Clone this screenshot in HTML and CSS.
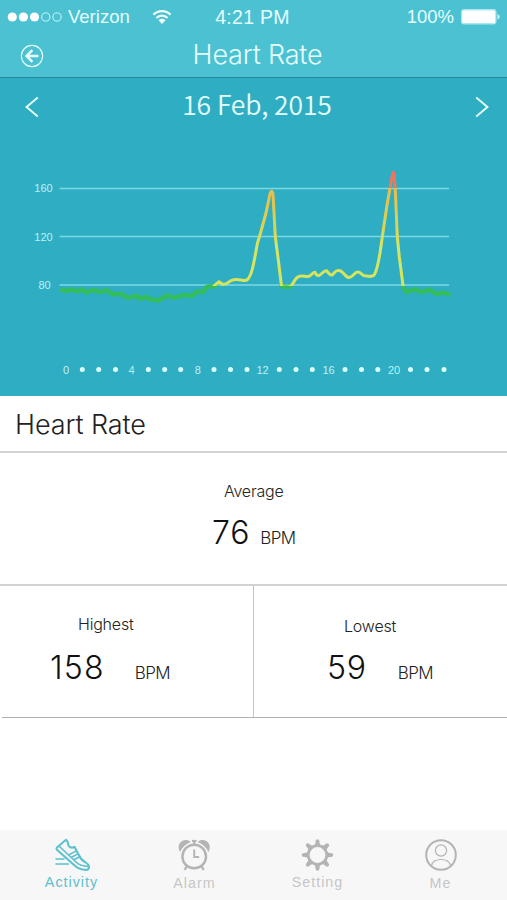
FILE: index.html
```html
<!DOCTYPE html>
<html lang="en">
<head>
  <meta charset="UTF-8">
  <meta name="viewport" content="width=device-width, initial-scale=1.0">
  <title>Heart Rate</title>
  <link rel="stylesheet" href="styles.css">
</head>
<body>
  <div class="app">
    <header class="header">
      <div class="status-bar">
        <div class="carrier">
          <svg class="signal" width="56" height="12" viewBox="0 0 56 12">
            <circle cx="5.3" cy="6" r="4.6" fill="#fff"/>
            <circle cx="16.4" cy="6" r="4.6" fill="#fff"/>
            <circle cx="27.5" cy="6" r="4.6" fill="#fff"/>
            <circle cx="38.8" cy="6" r="4.1" fill="none" stroke="#c5fafd"/>
            <circle cx="50" cy="6" r="4.1" fill="none" stroke="#c5fafd"/>
          </svg>
          <span class="carrier-name">Verizon</span>
          <svg class="wifi" width="20" height="16" viewBox="0 0 20 16">
            <path d="M1.4 5.6a12.4 12.4 0 0 1 17.2 0M4.4 9a8 8 0 0 1 11.2 0" fill="none" stroke="#f2ffff" stroke-width="2.3"/>
            <path d="M6.5 11.3a5 5 0 0 1 7 0L10 15z" fill="#f2ffff"/>
          </svg>
        </div>
        <div class="time">4:21 PM</div>
        <div class="power">
          <span class="percent">100%</span>
          <svg width="40" height="18" viewBox="0 0 40 18">
            <rect x="1" y="1" width="35.5" height="15.5" rx="3" fill="#a9e8ef"/>
            <rect x="2.2" y="2.5" width="33" height="12.5" rx="1.5" fill="#fff"/>
            <path d="M37.5 6v5.5q2.3-.8 2.3-2.7T37.5 6z" fill="#c5f3f6"/>
          </svg>
        </div>
      </div>
      <div class="nav-bar">
        <svg class="back" width="24" height="24" viewBox="0 0 24 24" fill="none" stroke="#e9ffff">
          <circle cx="12" cy="12" r="10.6" stroke-width="1.1"/>
          <path d="M18.4 12H6.8M12.4 6.2L6.5 12l5.9 5.8" stroke-width="2.4"/>
        </svg>
        <h1 class="title">Heart Rate</h1>
      </div>
    </header>

    <section class="chart-panel">
      <div class="date-bar">
        <svg width="14" height="22" viewBox="0 0 14 22" fill="none" stroke="#e4feff" stroke-width="1.9">
          <path d="M12.8 1.5L1.5 11l11.3 9.5"/>
        </svg>
        <div class="date">16 Feb, 2015</div>
        <svg width="14" height="22" viewBox="0 0 14 22" fill="none" stroke="#e4feff" stroke-width="1.9">
          <path d="M1.2 1.5L12.5 11 1.2 20.5"/>
        </svg>
      </div>
      <svg class="chart" width="507" height="260" viewBox="0 136 507 260">
        <defs>
          <linearGradient id="zones" gradientUnits="userSpaceOnUse" x1="0" y1="170" x2="0" y2="310">
            <stop offset="0" stop-color="#f1705c"/>
            <stop offset=".128" stop-color="#e6805e"/>
            <stop offset=".13" stop-color="#e6bd4e"/>
            <stop offset=".4" stop-color="#dcd353"/>
            <stop offset=".55" stop-color="#d8e564"/>
            <stop offset=".825" stop-color="#d6e45b"/>
            <stop offset=".826" stop-color="#33bd5d"/>
            <stop offset="1" stop-color="#33bd5d"/>
          </linearGradient>
        </defs>
        <g class="grid-lines">
          <path d="M59.5 188.5H449"/>
          <path d="M59.5 236.5H449"/>
          <path d="M59.5 285H449"/>
        </g>
        <g class="y-labels">
          <text x="43.5" y="192.3">160</text>
          <text x="43.5" y="240.5">120</text>
          <text x="44.5" y="289">80</text>
        </g>
        <!-- resting zone -->
        <g class="line resting">
          <path d="M62 290L66.5 291l5-1.5 5 2 5-2 5 3 6-2.5 8 2 6-2 6 4.3 8-.3 8 4 8-2.5 4 3.5 5-2.5 5 3 8 1 8.5-5 6.5 2.3 10-2.8 8.5 1 5.5-4.5 5.5.5 4-5.3 9-.7"/>
          <path d="M281.5 286q4 2 9 .2"/>
          <path d="M403.5 288l3.2 4.3 8.3-3 6.7 3 7.3-2.6 7.7 4.300 7.300-1.3 4.500 1.5"/>
        </g>
        <path class="line" stroke="url(#zones)" d="M214 286L219 281.7 222.5 284.3C227 285 229 281 231 280.7C236 278 240 280 243 280.5C248 281 249 278 251 273.5C254 265 256 250 257.5 243L260.5 233 266 213 270 194Q271.7 188.5 273 194L275.3 237 278.3 260 281.5 286Q286 288.5 291 286C294 283 295 278 298 277C302 274.5 305 277 308 276.5C311 276 313 272 315 272.3Q316.5 276 319 275.5C322 274 324 270 326.5 270.7C328 272 329.5 275.5 332 275C335 273 335 270.5 338 270.5C343 269.5 345 277.5 349 277.5C353 277.5 354 272 358 272C361 272 362 276 366 276C370 276.5 373 277 374.5 274.5C377 270 378.5 262 380 253L383.3 230 386.7 207 390 188 392.7 173.5Q393.5 171 394 174L395.2 188 397.3 237 399.3 257 403.2 287"/>
        <g class="x-labels">
          <text x="66" y="373.5">0</text>
          <text x="131.5" y="373.5">4</text>
          <text x="197.7" y="373.5">8</text>
          <text x="262.5" y="373.5">12</text>
          <text x="328.5" y="373.5">16</text>
          <text x="394" y="373.5">20</text>
        </g>
        <g fill="#d9ffff">
          <circle cx="82.3" cy="369.5" r="2.5"/>
          <circle cx="98.7" cy="369.5" r="2.5"/>
          <circle cx="115.5" cy="369.5" r="2.5"/>
          <circle cx="148.3" cy="369.5" r="2.5"/>
          <circle cx="164.7" cy="369.5" r="2.5"/>
          <circle cx="180.7" cy="369.5" r="2.5"/>
          <circle cx="214" cy="369.5" r="2.5"/>
          <circle cx="230.5" cy="369.5" r="2.5"/>
          <circle cx="247" cy="369.5" r="2.5"/>
          <circle cx="279.3" cy="369.5" r="2.5"/>
          <circle cx="296" cy="369.5" r="2.5"/>
          <circle cx="312.3" cy="369.5" r="2.5"/>
          <circle cx="345" cy="369.5" r="2.5"/>
          <circle cx="361.5" cy="369.5" r="2.5"/>
          <circle cx="377.8" cy="369.5" r="2.5"/>
          <circle cx="410.5" cy="369.5" r="2.5"/>
          <circle cx="427" cy="369.5" r="2.5"/>
          <circle cx="444" cy="369.5" r="2.5"/>
        </g>
      </svg>
    </section>

    <main class="summary">
      <h2 class="summary-title">Heart Rate</h2>
      <div class="stat average">
        <div class="label">Average</div>
        <div class="reading"><span class="value">76</span><span class="unit">BPM</span></div>
      </div>
      <div class="stat-row">
        <div class="stat highest">
          <div class="label">Highest</div>
          <div class="reading"><span class="value">158</span><span class="unit">BPM</span></div>
        </div>
        <div class="stat lowest">
          <div class="label">Lowest</div>
          <div class="reading"><span class="value">59</span><span class="unit">BPM</span></div>
        </div>
      </div>
    </main>

    <nav class="tab-bar">
      <a class="tab active">
        <svg width="38" height="34" viewBox="-1 0 38 34" fill="none" stroke="currentColor" stroke-width="2" stroke-linejoin="round" stroke-linecap="round">
          <path d="M12 1.8L3.2 9.2Q2 10.6 3.2 12L21.5 28.3Q24 30.5 27.5 31.2L32.500 32Q35 31.800 35 28.5Q34.500 26 31 24Q27 22 24.8 17L20.5 8.8Q16.5 11 14.4 7.5Q14 3 12 1.8z"/>
          <path d="M5.5 8.500L22 24Q26 28 34.500 28.500" stroke-width="1.7"/>
          <path d="M15.500 16.500l6.500-3.300M18 19l6-3.200M20.500 21.500l5.500-3" stroke-width="1.5"/>
          <path d="M2 21h8M2 26h12.500" stroke-width="1.5"/>
        </svg>
        <span>Activity</span>
      </a>
      <a class="tab lower">
        <svg width="34" height="34" viewBox="0.8 0 34 34" fill="none" stroke="currentColor">
          <circle cx="17" cy="18.5" r="11.8" stroke-width="2.5"/>
          <path d="M17 11.5v7.5h5" stroke-width="1.9"/>
          <path d="M9.5 28.5l-2 3.5M24.5 28.5l2 3.5M17 3v4" stroke-width="2.3"/>
          <path d="M14.7 2.9h4.6" stroke-width="2"/>
          <path d="M2.8 14C-2 5.5 7-1.5 13.6 4Q6.2 6.8 2.8 14zM31.2 14C36 5.500 27-1.5 20.4 4Q27.8 6.8 31.2 14z" fill="currentColor" stroke="none"/>
        </svg>
        <span>Alarm</span>
      </a>
      <a class="tab">
        <svg width="34" height="34" viewBox="1 0 34 34" fill="none" stroke="currentColor">
          <circle cx="17.5" cy="17" r="9.3" stroke-width="2.7"/>
          <g fill="currentColor" stroke="none">
            <path id="tooth" d="M13.7 8.5Q15.6 6.5 15.8 2.2Q17.5.3 19.2 2.2Q19.4 6.5 21.3 8.5z"/>
            <use href="#tooth" transform="rotate(45 17.5 17)"/>
            <use href="#tooth" transform="rotate(90 17.5 17)"/>
            <use href="#tooth" transform="rotate(135 17.5 17)"/>
            <use href="#tooth" transform="rotate(180 17.5 17)"/>
            <use href="#tooth" transform="rotate(225 17.5 17)"/>
            <use href="#tooth" transform="rotate(270 17.5 17)"/>
            <use href="#tooth" transform="rotate(315 17.5 17)"/>
          </g>
        </svg>
        <span>Setting</span>
      </a>
      <a class="tab lower">
        <svg width="34" height="34" viewBox="0 0 34 34" fill="none" stroke="currentColor">
          <circle cx="17" cy="17" r="14.8" stroke-width="2"/>
          <circle cx="17" cy="12.5" r="5.6" stroke-width="1.2"/>
          <path d="M7.5 27.5Q9 21.5 17 21.5T26.5 27.5" stroke-width="1.2"/>
        </svg>
        <span>Me</span>
      </a>
    </nav>
  </div>
</body>
</html>
```
FILE: styles.css
```css
* {
  margin: 0;
  padding: 0;
  box-sizing: border-box;
}

body {
  background: #fff;
  font-family: Inter, "Liberation Sans", sans-serif;
  font-weight: 300;
}

.app {
  width: 507px;
  height: 900px;
  display: flex;
  flex-direction: column;
  overflow: hidden;
}

svg {
  display: block;
  flex: none;
}

.header {
  height: 78px;
  background: #4cc1d2;
  border-bottom: 1px solid #238799;
  color: #e5feff;
}

.status-bar {
  height: 34px;
  display: grid;
  grid-template-columns: 1fr auto 1fr;
  align-items: center;
  padding: 0 7px;
  font-family: "Liberation Sans", sans-serif;
  font-weight: 400;
  font-size: 18.5px;
}

.carrier {
  display: flex;
  align-items: center;
}

.carrier-name {
  margin-left: 5px;
}

.wifi {
  margin-left: 22px;
}

.time {
  margin-right: 2px;
  font-size: 19.5px;
  letter-spacing: 0.3px;
}

.power {
  display: flex;
  justify-content: flex-end;
  align-items: center;
  gap: 6px;
}

.nav-bar {
  height: 43px;
  display: grid;
  grid-template-columns: 60px 1fr 52px;
  align-items: center;
  padding-bottom: 3px;
}

.back {
  margin: 3px 0 0 20px;
}

.title {
  font-size: 27px;
  font-weight: 300;
  letter-spacing: -0.2px;
  text-align: center;
}

.chart-panel {
  height: 318px;
  background: #2fadc2;
}

.date-bar {
  height: 58px;
  display: flex;
  align-items: center;
  justify-content: space-between;
  padding: 0 18px 0 25px;
  color: #e4feff;
}

.date {
  padding-bottom: 6px;
  font-family: "Noto Sans CJK SC", sans-serif;
  font-size: 26.5px;
  font-weight: 350;
  line-height: 36px;
  letter-spacing: -0.1px;
}

.grid-lines {
  stroke: #7cd9e6;
  stroke-width: 1.3;
}

.y-labels,
.x-labels {
  fill: #bdf1f6;
  font-family: "Liberation Sans", sans-serif;
  font-size: 11px;
  text-anchor: middle;
}

.line {
  fill: none;
  stroke-width: 3;
  stroke-linejoin: round;
  stroke-linecap: round;
}

.resting {
  stroke: #33bd5d;
  stroke-width: 4.4;
}

.summary {
  flex: 1;
  color: #222;
}

.summary-title {
  height: 57px;
  padding-left: 15px;
  border-bottom: 2px solid #d3d3d3;
  font-size: 27px;
  font-weight: 300;
  line-height: 57px;
  letter-spacing: -0.1px;
}

.stat {
  display: flex;
  flex-direction: column;
}

.average {
  height: 133px;
  padding-top: 28px;
  border-bottom: 2px solid #d3d3d3;
}

.average .label {
  margin-left: 224px;
}

.average .reading {
  margin: 10px 0 0 212px;
  gap: 10px;
}

.label {
  font-size: 16px;
  line-height: 20px;
  letter-spacing: -0.2px;
}

.reading {
  display: flex;
  align-items: baseline;
}

.value {
  font-size: 32px;
  line-height: 44px;
  letter-spacing: 0.8px;
  color: #111;
}

.unit {
  font-size: 17px;
  letter-spacing: -0.6px;
}

.stat-row {
  display: grid;
  grid-template-columns: 252px 1fr;
  height: 132px;
  margin-left: 2px;
  border-bottom: 1px solid #b0b0b0;
}

.highest {
  padding-top: 28px;
  border-right: 1px solid #c4c4c4;
}

.highest .label {
  margin-left: 76px;
}

.highest .reading {
  margin: 12px 0 0 48px;
  gap: 30px;
}

.highest .value {
  letter-spacing: 1.2px;
}

.lowest {
  padding-top: 30px;
}

.lowest .label {
  margin-left: 90px;
}

.lowest .reading {
  margin: 10px 0 0 73px;
  gap: 31px;
}

.tab-bar {
  height: 70px;
  display: grid;
  grid-template-columns: repeat(4, 123px);
  padding: 8px 0 0 10px;
  background: #f7f7f7;
}

.tab {
  display: flex;
  flex-direction: column;
  align-items: center;
  color: #b4b4b4;
  font-family: "Liberation Sans", sans-serif;
  font-weight: 400;
  font-size: 14.3px;
  line-height: 20px;
  letter-spacing: 1px;
}

.tab span {
  color: #c6c6c6;
}

.lower span {
  margin-top: 1px;
}

.active,
.active span {
  color: #5bc0cf;
}
```
